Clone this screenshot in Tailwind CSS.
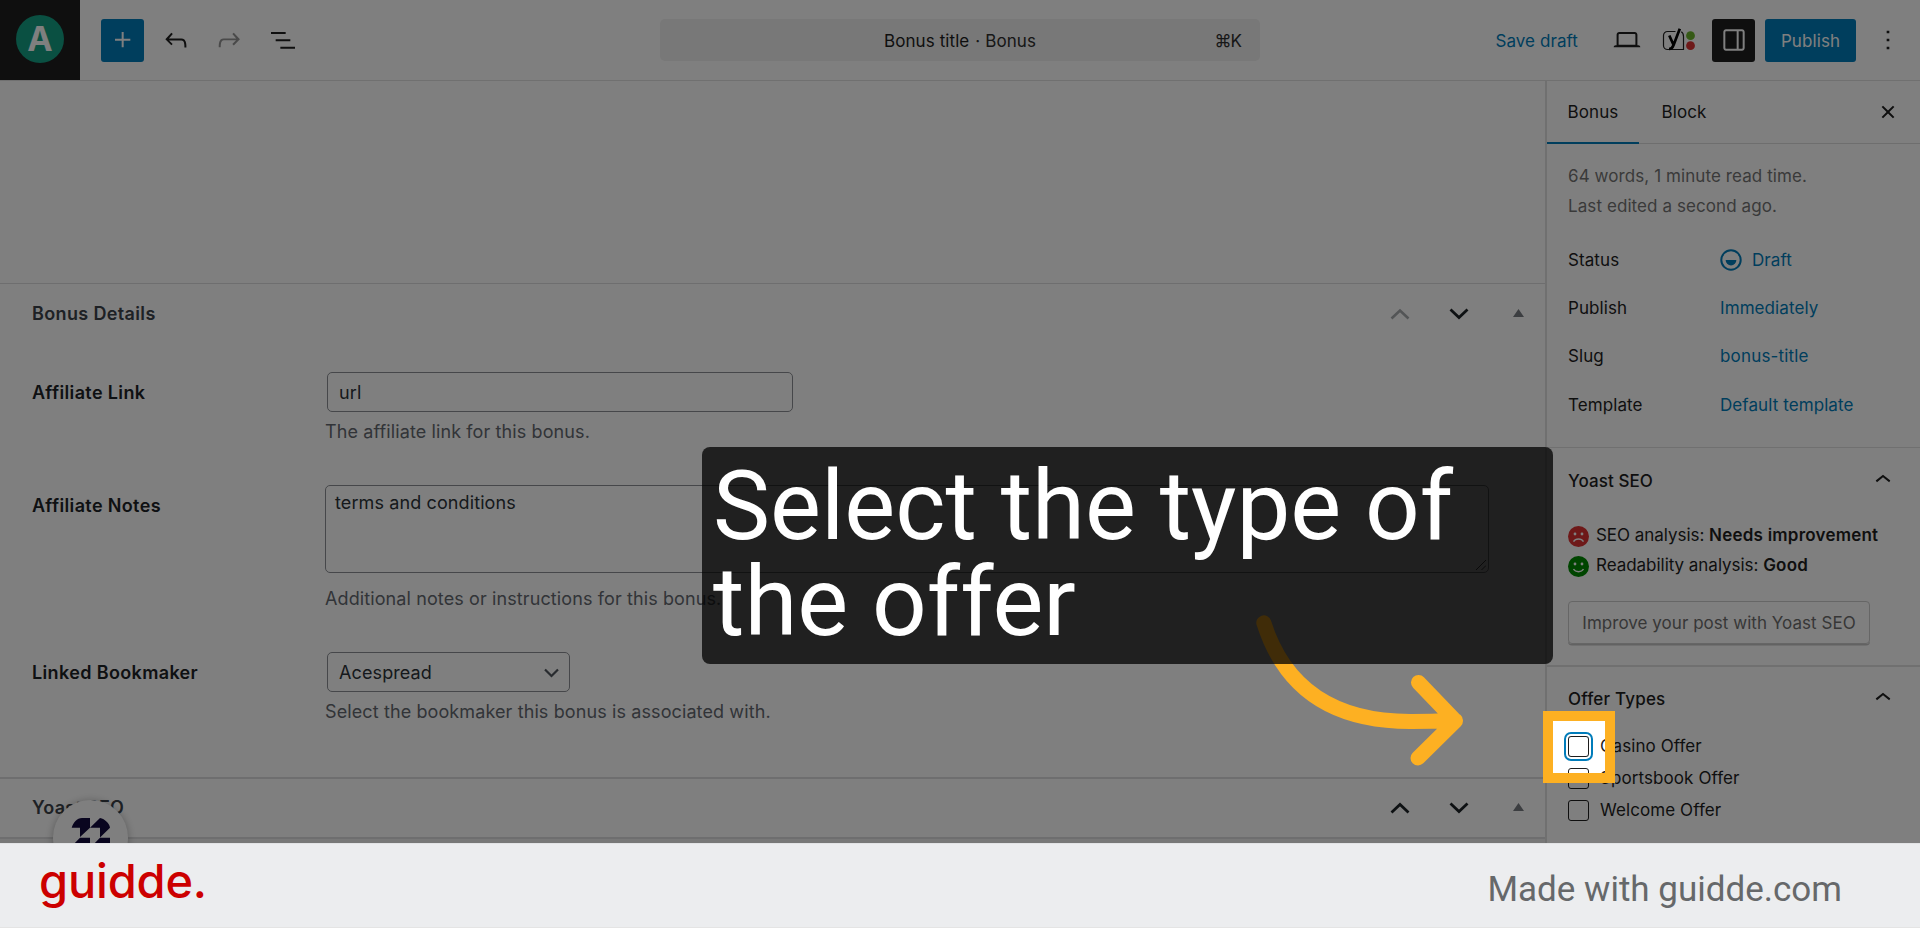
<!DOCTYPE html>
<html lang="en">
<head>
    <meta charset="UTF-8">
    <meta name="viewport" content="width=device-width, initial-scale=1.0">
    <title>Bonus title - Edit Bonus</title>
    <script src="https://cdn.jsdelivr.net/npm/@tailwindcss/browser@4"></script>
</head>
<body class="w-[1920px] h-[928px] overflow-hidden bg-white font-['Inter',sans-serif] text-[17px] leading-6 tracking-[0.005em] text-[#1e1e1e]">
    <div class="relative h-[843px] overflow-hidden">

        <!-- Editor header -->
        <header class="h-[81px] flex items-start justify-between border-b border-[#e0e0e0]">
            <div class="flex items-center w-[660px] h-20">
                <div class="w-20 h-20 bg-[#1e1e1e] flex items-center justify-center">
                    <div class="w-12 h-12 mb-0.5 rounded-full bg-[#15a084] text-white font-bold text-[34px] flex items-center justify-center">A</div>
                </div>
                <div class="flex items-center gap-[10.400px] ml-[21px]">
                    <button class="w-[43px] h-[43px] rounded-[3px] bg-[#007cba] flex items-center justify-center">
                        <svg class="w-8 h-8" viewBox="0 0 24 24" fill="#fff"><path d="M11 12.5V17.5H12.5V12.5H17.5V11H12.5V6H11V11H6V12.5H11Z"/></svg>
                    </button>
                    <button class="w-[43px] h-[43px] flex items-center justify-center">
                        <svg class="w-8 h-8" viewBox="0 0 24 24" fill="#1e1e1e"><path d="M18.3 11.7c-.6-.6-1.4-.9-2.3-.9H6.7l2.9-3.3-1.1-1-4.5 5L8.5 16l1-1-2.7-2.7H16c.5 0 .9.2 1.3.5 1 1 1 3.4 1 4.5v.3h1.5v-.2c0-1.5 0-4.3-1.5-5.7z"/></svg>
                    </button>
                    <button class="w-[43px] h-[43px] flex items-center justify-center">
                        <svg class="w-8 h-8" viewBox="0 0 24 24" fill="#949494"><path d="M15.6 6.5l-1.1 1 2.9 3.3H8c-.9 0-1.7.3-2.3.9-1.4 1.5-1.4 4.2-1.4 5.6v.2h1.5v-.3c0-1.1 0-3.5 1-4.5.3-.3.7-.5 1.3-.5h9.2L14.5 15l1.1 1.1 4.6-4.6-4.6-5z"/></svg>
                    </button>
                    <button class="w-[43px] h-[43px] flex items-center justify-center">
                        <svg class="w-8 h-8" viewBox="0 0 24 24" fill="#1e1e1e"><path d="M3 6h11v1.5H3V6Zm3.5 5.5h11V13h-11v-1.5ZM21 17H10v1.5h11V17Z"/></svg>
                    </button>
                </div>
            </div>

            <div class="w-[600px] h-[42px] mt-[19px] rounded-[5px] bg-[#f0f0f0] flex items-center justify-end relative">
                <div class="absolute inset-0 flex items-center justify-center gap-[6px] pt-0.5"><span>Bonus title</span><span class="text-[#2f2f2f]">· Bonus</span></div>
                <span class="mr-[19px] pt-px text-[#2f2f2f] tracking-[-0.06em]">⌘K</span>
            </div>

            <div class="w-[660px] h-20 flex items-center justify-end">
                <span class="text-[#007cba] mr-[33px] pt-0.5">Save draft</span>
                <svg class="w-8 h-8 mr-[18px]" viewBox="0 0 24 24" fill="#1e1e1e"><path d="M20.5 16h-.7V8c0-1.1-.9-2-2-2H6.2c-1.1 0-2 .9-2 2v8h-.7c-.8 0-1.5.7-1.5 1.5h20c0-.8-.7-1.5-1.5-1.5zM5.7 8c0-.3.2-.5.5-.5h11.6c.3 0 .5.2.5.5v7.6H5.7V8z"/></svg>
                <svg class="w-[36px] h-6 mr-[15px]" viewBox="0 0 36 24" fill="none">
                    <path d="M14.5 3.500H6.500a4 4 0 0 0-4 4v10a4 4 0 0 0 4 4H22.500V8.500c0-2-.8-3.900-2.300-4.700" stroke="#1e1e1e" stroke-width="1.200"/>
                    <path d="M8.300 7.500l4.300 9.500M18.800 0.800l-6.200 16.200c-.9 2.500-2 4-4.600 4" stroke="#000" stroke-width="2.700"/>
                    <circle cx="29.500" cy="7.700" r="4.400" fill="#6cb52d"/>
                    <circle cx="29.500" cy="17.700" r="4.400" fill="#dc3232"/>
                </svg>
                <button class="w-[43px] h-[43px] rounded-[3px] bg-[#1e1e1e] flex items-center justify-center mr-[10px]">
                    <svg class="w-8 h-8" viewBox="0 0 24 24" fill="#fff"><path fill-rule="evenodd" d="M18 4H6c-1.100 0-2 .9-2 2v12c0 1.100.9 2 2 2h12c1.100 0 2-.9 2-2V6c0-1.100-.9-2-2-2zm-4 14.500H6c-.3 0-.5-.2-.5-.5V6c0-.3.2-.5.5-.5h8v13zm4.500-.5c0 .3-.2.5-.5.5h-2.500v-13H18c.3 0 .5.2.5.5v12z"/></svg>
                </button>
                <button class="w-[91px] h-[43px] rounded-[3px] bg-[#007cba] text-white pt-0.5 mr-4">Publish</button>
                <svg class="w-8 h-8 mr-4" viewBox="0 0 24 24" fill="#1e1e1e"><path d="M13 19h-2v-2h2v2zm0-6h-2v-2h2v2zm0-6h-2V5h2v2z"/></svg>
            </div>
        </header>

        <div class="flex h-[762px]">
            <!-- Content and meta boxes -->
            <main class="w-[1545px] flex flex-col text-lg leading-6 tracking-[0.006em]">
                <div class="h-[202px] shrink-0"></div>
                <section class="h-[494px] shrink-0 border-t border-[#dcdcde]">
                    <div class="h-[60px] flex items-center pl-8 pr-[21px]">
                        <h2 class="grow font-semibold text-[#3c434a] tracking-[0.02em]">Bonus Details</h2>
                        <svg class="w-5 h-3 mr-[39px]" viewBox="0 0 20 12" fill="none" stroke="#a7aaad" stroke-width="2.600"><path d="M1.500 10.500L10 2.500l8.500 8"/></svg>
                        <svg class="w-5 h-3 mr-[44px]" viewBox="0 0 20 12" fill="none" stroke="#1d2327" stroke-width="2.800"><path d="M1.500 1.500L10 9.500l8.500-8"/></svg>
                        <svg class="w-[11px] h-2 mb-0.5" viewBox="0 0 11 8" fill="#787c82"><path d="M0 8L5.500 0 11 8z"/></svg>
                    </div>

                    <div class="flex mt-7 pl-8">
                        <div class="w-[294px] pt-[9px] font-semibold text-[#1d2327] tracking-[0.02em]">Affiliate Link</div>
                        <div>
                            <div class="w-[466px] h-10 ml-px rounded-[5px] border-[1.400px] border-[#8c8f94] pl-[11px] pt-px flex items-center text-[#2c3338]">url</div>
                            <p class="mt-2 -ml-px text-[#646970]">The affiliate link for this bonus.</p>
                        </div>
                    </div>

                    <div class="flex mt-[41px] pl-8">
                        <div class="w-[293px] pt-[9px] font-semibold text-[#1d2327] tracking-[0.02em]">Affiliate Notes</div>
                        <div>
                            <div class="relative w-[1164px] h-[88px] rounded-[5px] border-[1.400px] border-[#8c8f94] pl-[9px] pt-[5px] text-[#2c3338]">terms and conditions
                                <svg class="absolute right-0.5 bottom-0.5 w-[10px] h-[10px]" viewBox="0 0 10 10" stroke="#555"><path d="M0 10L10 0M5.500 10L10 5.500"/></svg>
                            </div>
                            <p class="mt-[14px] text-[#646970]">Additional notes or instructions for this bonus.</p>
                        </div>
                    </div>

                    <div class="flex mt-[41px] pl-8">
                        <div class="w-[294px] pt-[9px] font-semibold text-[#1d2327] tracking-[0.02em]">Linked Bookmaker</div>
                        <div>
                            <div class="w-[243px] h-10 ml-px rounded-[5px] border-[1.400px] border-[#8c8f94] pl-[11px] pr-[10px] pt-px flex items-center justify-between text-[#2c3338]">
                                <span>Acespread</span>
                                <svg class="w-[15px] h-[10px]" viewBox="0 0 15 10" fill="none" stroke="#50575e" stroke-width="2.200"><path d="M1 1.500l6.500 6.500L14 1.500"/></svg>
                            </div>
                            <p class="mt-2 -ml-px text-[#646970]">Select the bookmaker this bonus is associated with.</p>
                        </div>
                    </div>
                </section>
                <section class="h-[62px] shrink-0 border-y-2 border-[#dcdcde] flex items-center pl-8 pr-[21px]">
                    <h2 class="grow font-semibold text-[#3c434a] tracking-[0.015em]">Yoast SEO</h2>
                    <svg class="w-5 h-3 mr-[39px]" viewBox="0 0 20 12" fill="none" stroke="#1d2327" stroke-width="2.800"><path d="M1.500 10.500L10 2.500l8.500 8"/></svg>
                    <svg class="w-5 h-3 mr-[44px]" viewBox="0 0 20 12" fill="none" stroke="#1d2327" stroke-width="2.800"><path d="M1.500 1.500L10 9.500l8.500-8"/></svg>
                    <svg class="w-[11px] h-2 mb-0.5" viewBox="0 0 11 8" fill="#787c82"><path d="M0 8L5.500 0 11 8z"/></svg>
                </section>
                <div class="grow bg-[#f0f0f1]"></div>
            </main>

            <!-- Settings sidebar -->
            <aside class="w-[375px] border-l-2 border-[#e0e0e0]">
                <div class="h-[63px] flex border-b border-[#dddddd]">
                    <div class="w-[92px] h-[63px] flex items-center justify-center border-b-2 border-[#007cba]">Bonus</div>
                    <div class="w-[90px] flex items-center justify-center">Block</div>
                    <svg class="w-8 h-8 mt-[15px] ml-auto mr-4" viewBox="0 0 24 24" fill="#1e1e1e"><path d="M12 13.060l3.712 3.713 1.061-1.060L13.061 12l3.712-3.712-1.060-1.060L12 10.938 8.288 7.227l-1.061 1.060L10.939 12l-3.712 3.712 1.060 1.061L12 13.061z"/></svg>
                </div>

                <div class="h-[303px] px-[21px] pt-[17px]">
                    <div class="leading-[30px] text-[#757575]">
                        <p>64 words, 1 minute read time.</p>
                        <p>Last edited a second ago.</p>
                    </div>
                    <div class="mt-[15px] grid grid-cols-[152px_1fr] auto-rows-[48.200px] items-center">
                        <span>Status</span>
                        <span class="flex items-center gap-[10px] text-[#007cba]">
                            <svg class="w-[22px] h-[22px]" viewBox="0 0 22 22"><circle cx="11" cy="11" r="9.700" fill="none" stroke="#007cba" stroke-width="2"/><path d="M5.600 11h10.800a5.400 5.400 0 0 1-10.800 0z" fill="#007cba"/></svg>
                            Draft
                        </span>
                        <span>Publish</span><span class="text-[#007cba]">Immediately</span>
                        <span>Slug</span><span class="text-[#007cba] tracking-[0.01em]">bonus-title</span>
                        <span>Template</span><span class="text-[#007cba]">Default template</span>
                    </div>
                </div>

                <div class="h-[218px] pl-[21px] border-t border-[#e0e0e0]">
                    <div class="h-16 flex items-center justify-between pr-[21px]">
                        <h2 class="font-medium pt-0.5">Yoast SEO</h2>
                        <svg class="w-8 h-8" viewBox="0 0 24 24" fill="#1e1e1e"><path d="M6.500 12.400L12 8l5.500 4.400-.9 1.200L12 10l-4.500 3.600-1-1.200z"/></svg>
                    </div>
                    <div class="mt-2 leading-[30px]">
                        <div class="flex gap-[7px]">
                            <svg class="w-[21px] h-[21px] mt-[6px]" viewBox="0 0 21 21"><circle cx="10.500" cy="10.500" r="10.500" fill="#dc3232"/><circle cx="7" cy="8" r="1.400" fill="#fff"/><circle cx="14" cy="8" r="1.400" fill="#fff"/><path d="M5.500 15.600c2-3.400 8-3.400 10 0" fill="none" stroke="#fff" stroke-width="1.400"/></svg>
                            <span class="tracking-[-0.002em]">SEO analysis: <b class="font-semibold tracking-[0.013em]">Needs improvement</b></span>
                        </div>
                        <div class="flex gap-[7px]">
                            <svg class="w-[21px] h-[21px] mt-[6px]" viewBox="0 0 21 21"><circle cx="10.500" cy="10.500" r="10.500" fill="#008a00"/><circle cx="7" cy="8" r="1.400" fill="#fff"/><circle cx="14" cy="8" r="1.400" fill="#fff"/><path d="M5.500 13c2 3.600 8 3.600 10 0" fill="none" stroke="#fff" stroke-width="1.400"/></svg>
                            <span class="tracking-[-0.002em]">Readability analysis: <b class="font-semibold tracking-[0.013em]">Good</b></span>
                        </div>
                    </div>
                    <button class="mt-[21px] w-[302px] h-[43px] rounded-[4px] border-[1.400px] border-[#cccccc] shadow-[0_1.500px_0_#c4c4c4] text-[#6f6f6f] tracking-[0.002em]">Improve your post with Yoast SEO</button>
                </div>

                <div class="pl-[21px] border-t-2 border-[#e0e0e0]">
                    <div class="h-[63px] flex items-center justify-between pr-[21px]">
                        <h2 class="font-medium tracking-[0.011em]">Offer Types</h2>
                        <svg class="w-8 h-8 mb-0.5" viewBox="0 0 24 24" fill="#1e1e1e"><path d="M6.500 12.400L12 8l5.500 4.400-.9 1.200L12 10l-4.500 3.600-1-1.200z"/></svg>
                    </div>
                    <div class="mt-1 flex flex-col gap-2">
                        <label class="flex items-center gap-[11px]"><span class="w-[21px] h-[21px] rounded-[3px] border-[1.400px] border-[#1e1e1e] ring-2 ring-[#007cba] ring-offset-2"></span>Casino Offer</label>
                        <label class="flex items-center gap-[11px]"><span class="w-[21px] h-[21px] rounded-[3px] border-[1.400px] border-[#1e1e1e]"></span>Sportsbook Offer</label>
                        <label class="flex items-center gap-[11px]"><span class="w-[21px] h-[21px] rounded-[3px] border-[1.400px] border-[#1e1e1e]"></span>Welcome Offer</label>
                    </div>
                </div>
            </aside>
        </div>

        <!-- Floating widget button -->
        <div class="absolute left-[53px] top-[800px] w-[75px] h-[75px] rounded-full bg-white shadow-[0_1px_8px_rgba(0,0,0,0.3)]">
            <svg class="w-[75px] h-[75px]" viewBox="0 0 75 75" fill="#130a3e"><path d="M18.700 27.700C20 23 24 18 29 18h8v9.700l-10 9.300v-9.300zM37 27.700L47 18c5 1 9.500 5.500 10 9.700L47 37.500v-9.800zM18 47l9-9.300h10V47zM38 47l9-9.300h10V47z"/></svg>
        </div>

        <!-- Highlight, dims everything around it -->
        <div class="absolute left-[1543px] top-[711px] w-[72px] h-[72px] border-10 border-[#fdb022] shadow-[0_0_0_2000px_rgba(0,0,0,0.5)]"></div>

        <svg class="absolute left-[1250px] top-[610px] w-[220px] h-[170px]" viewBox="1250 610 220 170" fill="none" stroke="#fdb022" stroke-width="15" stroke-linecap="round" stroke-linejoin="round">
            <path d="M1263.800 622.800C1285 690 1335 722 1412 721.500Q1430 721.300 1455.500 720.500M1418.500 682.500l37 38.500-37.500 37"/>
        </svg>

        <!-- Step caption -->
        <div class="absolute left-[702px] top-[447px] w-[851px] h-[217px] rounded-lg bg-black/75 pl-[11px] pt-[11px] font-['Roboto',sans-serif] text-[96px] leading-24 tracking-normal text-white">Select the type of<br>the offer</div>
    </div>

    <footer class="h-[84px] bg-[#ecedef] border-t border-[#e2e3e5] flex items-center justify-between pl-[39px] pr-[78px]">
        <div class="text-[47px] leading-none font-medium text-[#cc0000] tracking-[-0.004em] mb-[11px]">guidde.</div>
        <div class="font-['Roboto',sans-serif] text-[35px] leading-none tracking-normal text-[#66686a] mt-[7px]">Made with guidde.com</div>
    </footer>
    <div class="h-px bg-[#e4e4e4]"></div>
</body>
</html>
